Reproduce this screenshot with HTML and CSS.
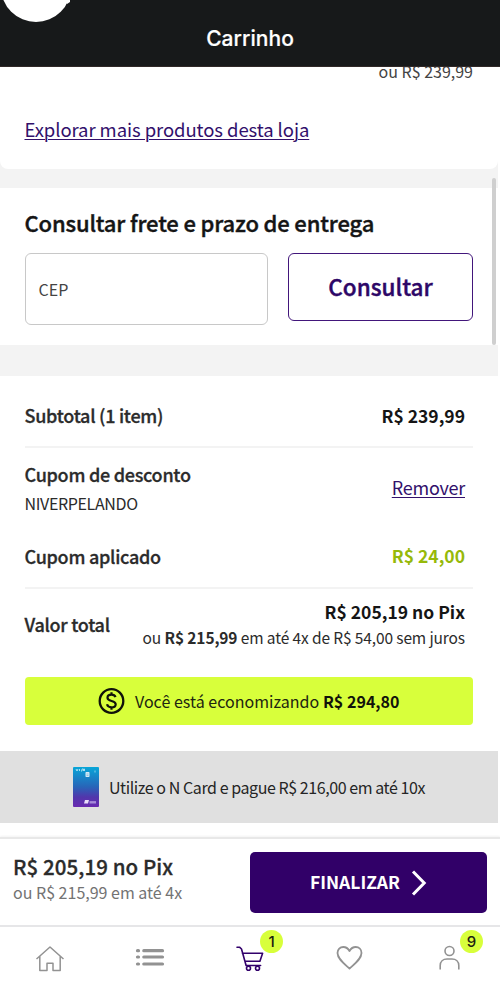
FILE: index.html
```html
<!DOCTYPE html>
<html lang="pt-BR">
<head>
<meta charset="utf-8">
<title>Carrinho</title>
<link rel="stylesheet" href="styles.css">
</head>
<body>
<header class="header">
  <svg class="bubble" width="72" height="24" viewBox="0 0 72 24"><circle cx="36" cy="-13" r="35" fill="#fff"/><path d="M64 0h6v2l-3 2z" fill="#fff"/></svg>
  <h1 class="header-title">Carrinho</h1>
</header>
<main class="main">
  <section class="product">
    <div class="product-price">ou R$ 239,99</div>
    <a class="link store-link">Explorar mais produtos desta loja</a>
  </section>
  <section class="shipping">
    <h2 class="shipping-title">Consultar frete e prazo de entrega</h2>
    <div class="shipping-form">
      <div class="cep">CEP</div>
      <button class="consult"><span>Consultar</span></button>
    </div>
  </section>
  <section class="summary">
    <div class="row subtotal"><span class="label">Subtotal (1 item)</span><b class="value single">R$ 239,99</b></div>
    <div class="row coupon">
      <div><div class="label">Cupom de desconto</div><div class="code">NIVERPELANDO</div></div>
      <a class="link remove">Remover</a>
    </div>
    <div class="row applied"><span class="label">Cupom aplicado</span><b class="value single green">R$ 24,00</b></div>
    <div class="row total">
      <span class="label">Valor total</span>
      <div class="total-values"><b class="value">R$ 205,19 no Pix</b><div class="installments">ou <b>R$ 215,99</b> em até 4x de R$ 54,00 sem juros</div></div>
    </div>
    <div class="savings">
      <svg width="28" height="28" viewBox="0 0 28 28" fill="none" stroke="#10130a"><circle cx="13.500" cy="14" r="11.800" stroke-width="2.300"/><path d="M17.500 10.200C16.900 8.500 15.400 7.700 13.500 7.700c-2.300 0-4 1.100-4 3 0 4.400 8.200 2.100 8.200 6.500 0 2-1.900 3.100-4.200 3.100-2.400 0-4-1.100-4.500-3M13.500 5.300v2.800M13.500 20v2.800" stroke-width="2.200"/></svg>
      <span class="savings-text">Você está economizando <b>R$ 294,80</b></span>
    </div>
  </section>
  <section class="ncard">
    <svg width="26" height="40" viewBox="0 0 26 40"><defs><linearGradient id="card" x1="0" y1="0" x2="0" y2="1"><stop offset="0" stop-color="#08a6d8"/><stop offset=".5" stop-color="#2864b8"/><stop offset=".75" stop-color="#5136ac"/><stop offset="1" stop-color="#6929b0"/></linearGradient></defs><rect width="26" height="40" rx="1" fill="url(#card)"/><path d="M3 2l1 2 1-2M6.500 2v2M8 4h1V2h1M10.500 4V2h1v2" stroke="#c9effa" stroke-width=".8" fill="none"/><rect x="12.500" y="5" width="4" height="5" rx=".7" fill="#d6eaf6"/><path d="M13.500 7h2M13.500 8.500h2" stroke="#65a9d4" stroke-width=".6"/><path d="M22 3.500v2" stroke="#82d2ed"/><path d="M11 36.500l1-3.500h4l-1 3.500z" fill="#e9ddfa"/><path d="M16.500 35.300h6.500" stroke="#a68ad8" stroke-width="2.400"/></svg>
    <span class="ncard-text">Utilize o N Card e pague R$ 216,00 em até 10x</span>
  </section>
  <i class="scrollbar"></i>
</main>
<section class="checkout">
  <div class="checkout-price"><div class="pix">R$ 205,19 no Pix</div><div class="pix-alt">ou R$ 215,99 em até 4x</div></div>
  <button class="finish"><span class="finish-text">FINALIZAR</span><svg width="16" height="26" viewBox="0 0 16 26"><path d="M2 1.500L13.200 13 2 24.500" fill="none" stroke="#fff" stroke-width="3"/></svg></button>
</section>
<nav class="nav">
  <a class="tab"><svg width="30" height="28" viewBox="0 0 30 28" fill="none" stroke="#929292" stroke-width="1.500" stroke-linejoin="round"><path d="M1.500 14L15 2l13.500 12M4.800 11.500V25.500H12v-7.300h6v7.300h7.200v-14"/></svg></a>
  <a class="tab"><svg width="30" height="28" viewBox="0 0 30 28" stroke="#929292" stroke-width="3.200" stroke-linecap="round"><path d="M2.500 5.700h1M8.800 5.700h18.700M2.500 12h1M8.800 12h18.700M2.500 19h1M8.800 19h18.700"/></svg></a>
  <a class="tab"><svg width="30" height="28" viewBox="0 0 30 28" fill="none" stroke="#32006b" stroke-width="1.600" stroke-linejoin="round" stroke-linecap="round"><path d="M2 2.200h2.500L6.500 4l4.600 16.500h14.500M7.400 8.300h20.200l-2.700 8H9.800"/><circle cx="13.500" cy="23.200" r="2"/><circle cx="22.500" cy="23.200" r="2"/></svg><span class="badge">1</span></a>
  <a class="tab"><svg width="30" height="28" viewBox="0 0 30 28" fill="none" stroke="#929292" stroke-width="1.800" stroke-linejoin="round"><path d="M14.500 23.500C9 18.500 2.500 13.800 2.500 8c0-3.600 2.600-6 5.800-6C11 2 13.100 3.500 14.500 6c1.400-2.500 3.500-4 6.200-4C23.900 2 26.500 4.400 26.500 8c0 5.800-6.500 10.500-12 15.500z"/></svg></a>
  <a class="tab"><svg width="30" height="28" viewBox="0 0 30 28" fill="none" stroke="#929292" stroke-width="1.600"><circle cx="14.500" cy="6" r="4.500"/><path d="M5.200 24.500v-4c0-4 2.800-6.500 6.800-6.500h5c4 0 6.800 2.500 6.800 6.500v4"/></svg><span class="badge">9</span></a>
</nav>
</body>
</html>
```
FILE: styles.css
```css
* { box-sizing: border-box; }
body {
  margin: 0;
  width: 500px;
  height: 989px;
  overflow: hidden;
  display: flex;
  flex-direction: column;
  background: #fff;
  color: #2b2b2b;
  font-family: "Noto Sans CJK SC", "Noto Sans", sans-serif;
  font-size: 16px;
  line-height: 24px;
  white-space: nowrap;
}
h1, h2 { margin: 0; }
button { font: inherit; padding: 0; margin: 0; }
svg { display: block; flex: none; }
.header {
  position: relative;
  z-index: 1;
  flex: none;
  height: 67px;
  background: #17191a;
  border-bottom: 1px solid #302827;
  padding-top: 25px;
  text-align: center;
}
.bubble { position: absolute; left: 0; top: 0; }
.header-title {
  font: 500 21px/28px Inter, sans-serif;
  color: #fff;
  letter-spacing: .05px;
  -webkit-text-stroke: .2px;
}
.main {
  position: relative;
  flex: none;
  height: 770px;
  padding-right: 2px;
}
.product {
  display: flex;
  flex-direction: column;
  align-items: flex-start;
  height: 102px;
  padding: 0 25px 0 24.5px;
  box-shadow: 0 8px #f3f3f3;
  border-radius: 0 0 8px 8px;
}
.product-price { align-self: flex-end; margin-top: -8px; height: 24px; line-height: 24px; color: #444; }
.link { color: #32106b; text-decoration: underline; text-decoration-thickness: 1px; text-underline-offset: 2px; }
.store-link { display: block; margin-top: 34px; font-size: 18.5px; line-height: 24px; letter-spacing: -.08px; }
.shipping {
  height: 207px;
  padding: 19px 25px 0 24.5px;
  border-top: 19px solid #f3f3f3;
  border-bottom: 31px solid #f3f3f3;
}
.shipping-title { margin-top: -1px; font-size: 22px; line-height: 32px; font-weight: 500; color: #151515; letter-spacing: -.15px; -webkit-text-stroke: .4px; }
.shipping-form { display: flex; justify-content: space-between; margin-top: 15px; }
.cep { width: 243.5px; height: 72px; padding-left: 13px; border: 1px solid #c8c8c8; border-radius: 6px; line-height: 71px; color: #444; }
.consult { width: 185px; height: 68px; padding-bottom: 2px; border: 1.5px solid #42167b; border-radius: 6px; background: #fff; color: #2d0767; font-size: 22.5px; font-weight: 500; -webkit-text-stroke: .4px; }
.summary { height: 375px; padding: 0 25px 0 24.5px; }
.row { display: flex; justify-content: space-between; align-items: center; padding-right: 8px; font-size: 18px; }
.label { font-weight: 500; color: #2b2b2b; letter-spacing: -.27px; -webkit-text-stroke: .3px; }
.value { font-size: 17.5px; color: #151515; }
.value.single { padding-top: 1px; }
.value.green { color: #96b90a; }
.subtotal { height: 72px; padding-top: 8px; border-bottom: 2px solid #f3f3f3; }
.coupon { height: 78px; }
.coupon .label { line-height: 32px; }
.remove { letter-spacing: -.25px; }
.code { font-size: 16px; line-height: 27px; letter-spacing: -.36px; }
.applied { height: 63px; padding-bottom: 2px; border-bottom: 2px solid #f3f3f3; }
.total { height: 74px; padding-bottom: 4px; }
.total-values { text-align: right; }
.total-values .value { display: block; line-height: 26px; }
.installments { font-size: 15.5px; line-height: 24px; letter-spacing: -.12px; }
.savings {
  display: flex;
  align-items: center;
  justify-content: center;
  gap: 9px;
  height: 48px;
  margin-top: 14px;
  border-radius: 4px;
  background: #d8ff3b;
  color: #202510;
}
.savings-text { letter-spacing: .03px; }
.savings b { color: #11130a; }
.ncard { display: flex; align-items: center; justify-content: center; gap: 10px; height: 72px; background: #e0e0e0; color: #252525; }
.ncard-text { letter-spacing: -.43px; }
.scrollbar { position: absolute; right: 4px; top: 111px; width: 4px; height: 167px; border-radius: 2px; background: #cfcfcf; }
.checkout {
  flex: none;
  display: flex;
  justify-content: space-between;
  height: 88px;
  padding: 13px 13px 0;
  border-top: 2px solid #e8e8e8;
  box-shadow: 0 -1px 2px #f3f3f3;
}
.checkout-price { margin-top: -1px; }
.pix { font-size: 20.5px; line-height: 30px; font-weight: 500; letter-spacing: .08px; -webkit-text-stroke: .3px; }
.pix-alt { font-size: 16px; line-height: 22px; color: #737373; }
.finish {
  display: flex;
  align-items: center;
  justify-content: center;
  gap: 11px;
  width: 237px;
  height: 61px;
  border: 0;
  border-radius: 5px;
  background: #310068;
  color: #fff;
  font-size: 17.5px;
  font-weight: 700;
}
.finish-text { padding-bottom: 2px; }
.nav { flex: none; height: 64px; display: grid; grid-template-columns: repeat(5, 1fr); border-top: 2px solid #e6e6e8; }
.tab { position: relative; display: flex; justify-content: center; padding-top: 18px; }
.badge {
  position: absolute;
  left: 60px;
  top: 3px;
  width: 23px;
  height: 23px;
  border-radius: 50%;
  background: #d8ff3b;
  color: #1c2010;
  font: 500 15px/23px Inter, sans-serif;
  text-align: center;
}
```
